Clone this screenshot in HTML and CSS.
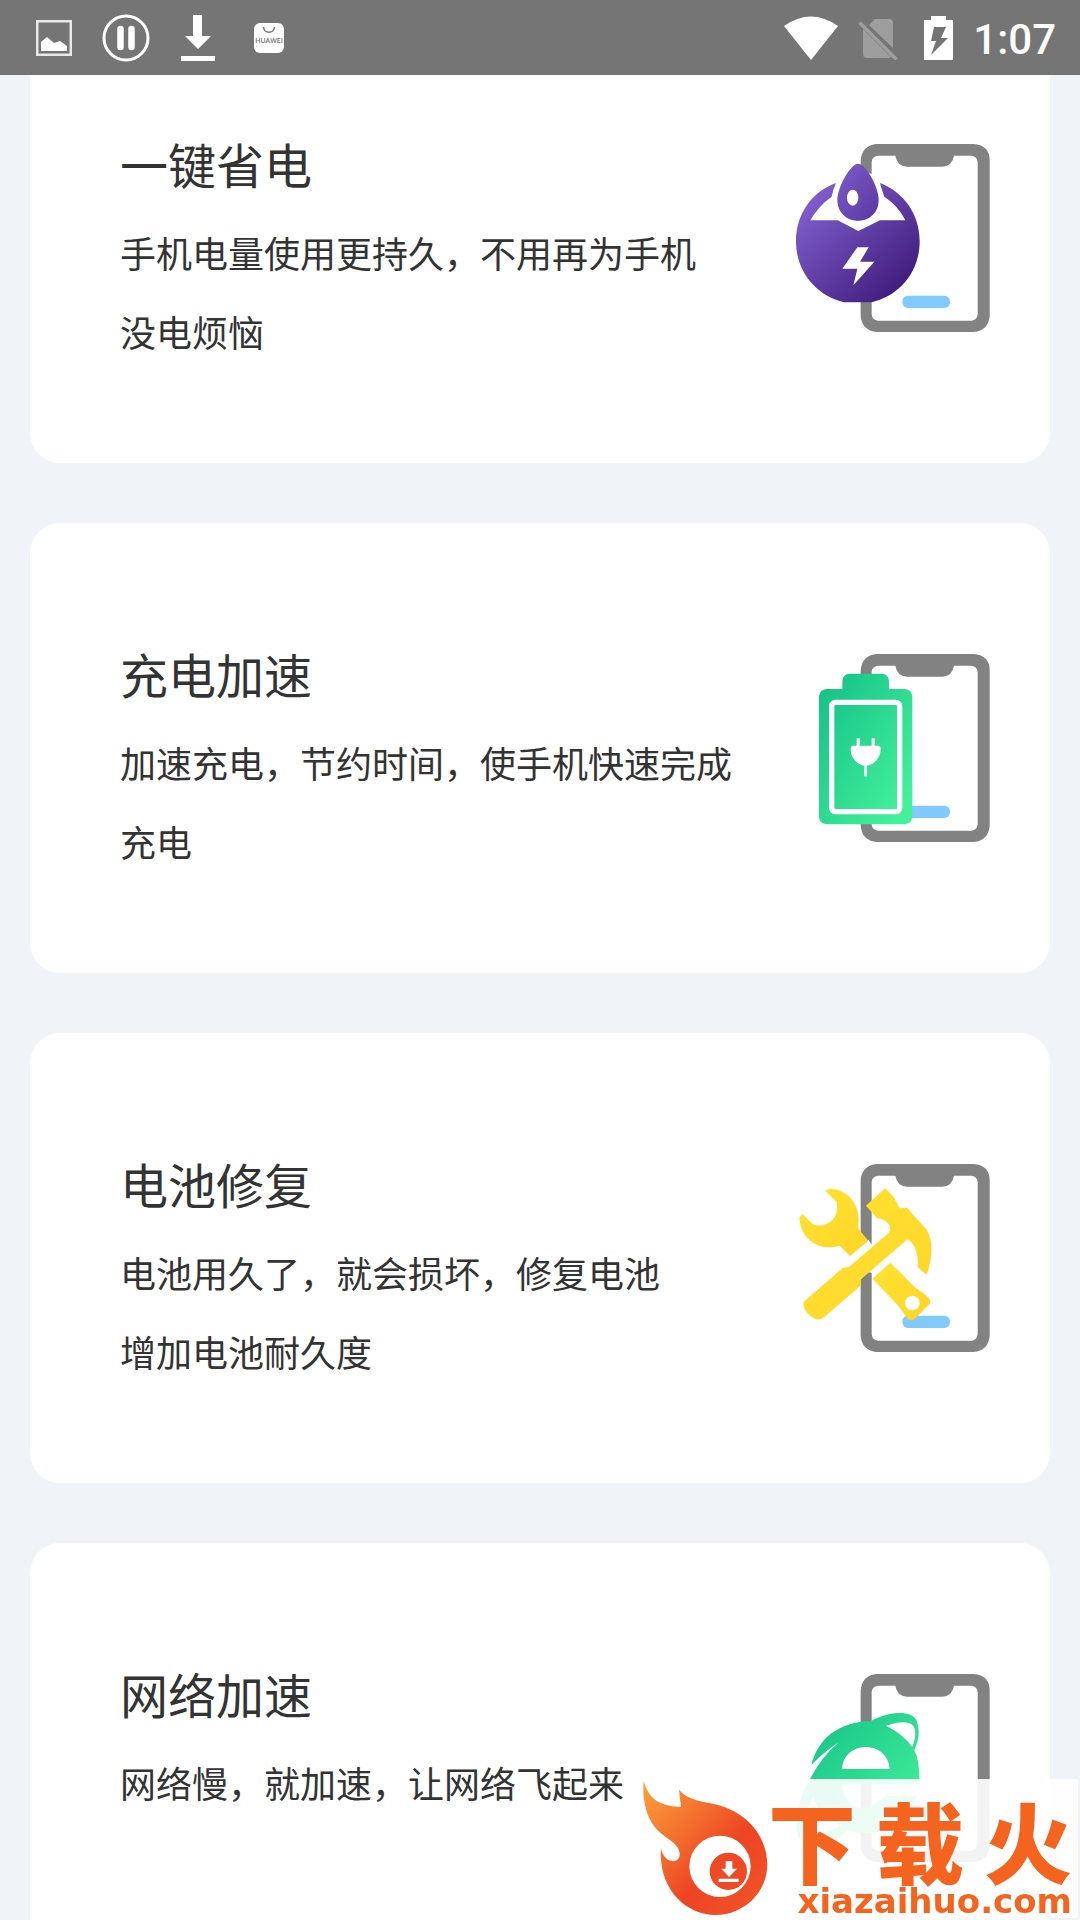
FILE: index.html
```html
<!DOCTYPE html>
<html lang="zh-CN">

<head>
  <meta charset="UTF-8" />
  <meta name="viewport" content="width=device-width, initial-scale=1.0" />
  <title>省电管家</title>
  <link rel="stylesheet" href="styles.css">
</head>

<body>
  <header class="status-bar">
    <div class="status-left">
      <svg class="icon-picture" viewBox="0 0 36 36">
        <rect x="1" y="1" width="34" height="34" fill="none" stroke="#e8e8e8" stroke-width="3" />
        <path d="M5 31V22L11 17L18 23L24 21L31 26V31Z" fill="#fff" />
      </svg>
      <svg class="icon-pause" viewBox="0 0 48 48">
        <circle cx="24" cy="24" r="22" fill="none" stroke="#fff" stroke-width="3" />
        <path d="M18.500 15V33M29.500 15V33" stroke="#fff" stroke-width="6.500" stroke-linecap="round" />
      </svg>
      <svg class="icon-download" viewBox="0 0 36 48">
        <path d="M13 1H22V22H31L18 35L5 22H13ZM1 42H35V47H1Z" fill="#fff" />
      </svg>
      <svg class="icon-store" viewBox="0 0 30 30">
        <rect width="30" height="30" rx="6" fill="#fff" />
        <path d="M9.500 4C10 11 20 11 20.500 4" fill="none" stroke="#757575" stroke-width="1.500" />
        <text x="15" y="20" text-anchor="middle">HUAWEI</text>
      </svg>
    </div>
    <div class="status-right">
      <svg class="icon-wifi" viewBox="0 0 54 44">
        <path d="M0 10Q27 -9 54 10L27 44Z" fill="#fff" />
      </svg>
      <svg class="icon-sim" viewBox="0 0 40 44">
        <path d="M17 3H31Q35 3 35 7V32L11 9ZM5 13L33 41Q32 42 31 42H9Q5 42 5 38Z" fill="#9e9e9e" />
        <path d="M1.500 6.500L38.500 43.500" stroke="#9e9e9e" stroke-width="3.500" />
      </svg>
      <svg class="icon-battery" viewBox="0 0 29 44">
        <path d="M7 0H22V4H29V44H0V4H7Z" fill="#fff" />
        <path d="M10 11H22L17 22H24L7 39L12 25H7Z" fill="#757575" />
      </svg>
      <span class="time">1:07</span>
    </div>
  </header>

  <!-- shared phone outline used by every card -->
  <svg class="defs" width="0" height="0">
    <defs>
      <symbol id="phone" viewBox="75 71 585 564">
        <path fill="#828282" fill-rule="evenodd" d="M320 71H611Q659 75 659 120V587Q655 631 611 635H320Q276 631 272 587V120Q276 75 320 71ZM324 106Q306 108 305 125V582Q306 599 324 601H605Q621 599 623 582V125Q621 108 605 106H552Q547 137 517 139H411Q381 137 376 106Z" />
        <rect x="397" y="526" width="143" height="37" rx="17" fill="#80caff" />
      </symbol>
      <linearGradient id="purple" x1="0" y1="0" x2="1" y2="1">
        <stop offset="0.15" stop-color="#7d5cc8" />
        <stop offset="0.9" stop-color="#3e1a7a" />
      </linearGradient>
      <linearGradient id="drop" x1="0" y1="0" x2="1" y2="1">
        <stop offset="0" stop-color="#7d5cc8" />
        <stop offset="1" stop-color="#5b38a0" />
      </linearGradient>
      <linearGradient id="green" x1="0" y1="0" x2="1" y2="1">
        <stop offset="0.1" stop-color="#18c488" />
        <stop offset="0.9" stop-color="#43f19b" />
      </linearGradient>
      <linearGradient id="yellow" x1="0" y1="0" x2="1" y2="1">
        <stop offset="0" stop-color="#ffe430" />
        <stop offset="1" stop-color="#ffd42a" />
      </linearGradient>
      <linearGradient id="flame" x1="0" y1="0" x2="1" y2="1">
        <stop offset="0" stop-color="#fca13a" />
        <stop offset="0.3" stop-color="#f4762f" />
        <stop offset="0.6" stop-color="#ee4424" />
        <stop offset="1" stop-color="#f0562a" />
      </linearGradient>
    </defs>
  </svg>

  <main class="card-list">
    <section class="card">
      <div class="card-text">
        <h2>一键省电</h2>
        <p>手机电量使用更持久，不用再为手机<br>没电烦恼</p>
      </div>
      <svg class="card-icon" viewBox="75 71 585 564">
        <use href="#phone" x="75" y="71" width="585" height="564" />
        <path fill="#fff" d="M305 160L272 155L200 180L120 300L265 333L408 300L330 187Z" />
        <path fill="url(#purple)" d="M198 188Q188 210 185 229Q145 257 121 300H203L265 332L330 300H406Q385 257 343 229Q335 208 330 188C400 215 449 280 449 362C449 455 390 525 305 546H222C138 525 78 455 78 362C78 280 128 212 198 188Z" />
        <path fill="url(#drop)" d="M264 130C288 130 326 202 326 238C326 276 299 301 264 301C229 301 202 276 202 238C202 202 241 130 264 130Z" />
        <ellipse cx="248" cy="232" rx="17" ry="24" fill="#fff" />
        <path fill="#fff" d="M262 381H296L270 424H313L250 495L262 445H217Z" />
      </svg>
    </section>

    <section class="card">
      <div class="card-text">
        <h2>充电加速</h2>
        <p>加速充电，节约时间，使手机快速完成<br>充电</p>
      </div>
      <svg class="card-icon" viewBox="75 71 585 564">
        <use href="#phone" x="75" y="71" width="585" height="564" />
        <path fill="url(#green)" d="M237 130H337Q357 133 357 153V176H405Q425 178 427 198V560Q425 580 405 582H169Q149 580 147 560V198Q149 178 169 176H217V153Q217 133 237 130Z" />
        <rect x="185" y="216" width="204" height="328" rx="12" fill="none" stroke="#fff" stroke-width="16" />
        <path fill="#fff" d="M260 324H269V346H305V324H314V346H326Q332 346 332 354C332 383 315 402 291 406V438H283V406C259 402 242 383 242 354Q242 346 248 346H260Z" />
      </svg>
    </section>

    <section class="card">
      <div class="card-text">
        <h2>电池修复</h2>
        <p>电池用久了，就会损坏，修复电池<br>增加电池耐久度</p>
      </div>
      <svg class="card-icon" viewBox="75 71 585 564">
        <use href="#phone" x="75" y="71" width="585" height="564" />
        <path fill="#fff" d="M240 346L295 298L306 313V398L295 395L272 416V350Z" />
        <path fill="url(#yellow)" d="M166 152Q174 144 187 146C240 151 276 202 264 264L295 301L240 347L209 316C144 336 91 294 88 231L98 222L128 251Q150 261 177 247Q207 228 200 184Z" />
        <path fill="url(#yellow)" fill-rule="evenodd" d="M361 367L433 439L471 467Q485 480 479 490L433 537Q426 543 413 535L386 498L308 415ZM427 466A22 22 0 1 0 427 510A22 22 0 1 0 427 466Z" />
        <path fill="url(#yellow)" d="M345 144L371 169L389 204L411 202L470 268C491 302 487 362 469 404L443 380C447 340 432 306 412 297L273 417V435L162 531Q144 545 121 527Q98 507 101 485L219 382L237 380L356 278Q366 264 354 249Q344 237 320 232L288 196Z" />
      </svg>
    </section>

    <section class="card">
      <div class="card-text">
        <h2>网络加速</h2>
        <p>网络慢，就加速，让网络飞起来</p>
      </div>
      <svg class="card-icon" viewBox="75 71 585 564">
        <use href="#phone" x="75" y="71" width="585" height="564" />
        <path fill="#fff" d="M216 356C222 268 353 268 359 356ZM348 226Q410 205 437 224V290L400 260Z" />
        <path fill="url(#green)" fill-rule="evenodd" d="M124 344C145 262 207 215 303 212C363 180 424 181 439 209Q456 248 433 300Q449 330 449 402H216C220 465 276 500 330 450L348 438H441C410 520 330 570 235 540C170 590 100 600 82 550C72 500 91 430 122 382Q158 315 205 277Q165 301 124 344ZM216 356H359C353 268 222 268 216 356ZM348 226Q398 250 427 290C450 225 430 200 348 226ZM130 442C96 500 90 550 120 552C150 555 190 540 215 525Q150 500 130 442Z" />
      </svg>
    </section>
  </main>

  <aside class="watermark">
    <svg class="watermark-logo" viewBox="0 0 375 405">
      <path fill="url(#flame)" d="M2 0C18 58 55 76 114 78L108 26C128 50 160 60 210 68C305 87 373 162 373 250C373 335 303 402 218 402C125 402 45 320 54 202C60 232 80 245 98 239Q116 231 107 205C95 177 65 174 35 137C5 100 -2 42 2 0Z" />
      <circle cx="231" cy="256" r="92" fill="#fff" />
      <circle cx="256" cy="271" r="56" fill="#ee4a26" />
      <path fill="#fff" d="M248 241H268V263H282L258 288L235 263H248ZM227 293H287V303H227Z" />
    </svg>
    <div class="watermark-text">
      <strong class="watermark-name"><span>下</span><span>载</span><span>火</span></strong>
      <span class="watermark-url">xiazaihuo.com</span>
    </div>
  </aside>
</body>

</html>
```
FILE: styles.css
```css
* {
  box-sizing: border-box;
}

body {
  margin: 0;
  height: 100vh;
  overflow: hidden;
  background: #f0f4f9;
  color: #333;
  font-family: "Noto Sans CJK SC", sans-serif;
}

svg {
  display: block;
  flex-shrink: 0;
}

.defs {
  position: absolute;
}

.status-bar {
  position: fixed;
  top: 0;
  left: 0;
  right: 0;
  z-index: 2;
  height: 75px;
  padding: 0 24px 0 36px;
  display: flex;
  justify-content: space-between;
  align-items: center;
  background: #757575;
}

.status-left,
.status-right {
  display: flex;
  align-items: center;
}

.status-left {
  gap: 30px;
}

.status-right {
  gap: 20px;
}

.icon-picture {
  width: 36px;
  height: 36px;
}

.icon-pause {
  width: 48px;
  height: 48px;
}

.icon-download {
  width: 36px;
  height: 48px;
}

.icon-store {
  width: 30px;
  height: 30px;
  margin-left: 8px;
}

.icon-store text {
  font-family: "Open Sans", sans-serif;
  font-size: 7px;
  font-weight: 600;
  fill: #757575;
}

.icon-wifi {
  width: 54px;
  height: 44px;
}

.icon-sim {
  width: 40px;
  height: 44px;
  margin-right: 6px;
}

.icon-battery {
  width: 29px;
  height: 44px;
}

.time {
  padding-top: 4px;
  font-family: Roboto, sans-serif;
  font-size: 42px;
  font-weight: 500;
  line-height: 48px;
  color: #fff;
}

.card-list {
  display: flex;
  flex-direction: column;
  gap: 60px;
  padding: 13px 30px;
}

.card {
  flex-shrink: 0;
  min-height: 450px;
  padding: 0 60px 0 90px;
  display: flex;
  justify-content: space-between;
  align-items: center;
  background: #fff;
  border-radius: 30px;
}

.card-text {
  padding-top: 10px;
}

.card-text h2 {
  margin: 0 0 2px;
  font-size: 48px;
  font-weight: 400;
  line-height: 96px;
}

.card-text p {
  margin: 0;
  min-height: 158px;
  font-size: 36px;
  line-height: 79px;
}

.card-icon {
  width: 195px;
  height: 188px;
}

.watermark {
  position: fixed;
  right: 2px;
  bottom: 2px;
  z-index: 1;
  height: 139px;
  padding: 2px 6px 0 5px;
  display: flex;
  align-items: flex-start;
  background: rgba(255, 255, 255, 0.9);
}

.watermark-logo {
  width: 125px;
  height: 135px;
}

.watermark-text {
  min-width: 304px;
  padding-top: 14px;
  display: flex;
  flex-direction: column;
  color: #f4641e;
}

.watermark-name {
  display: flex;
  justify-content: space-between;
  font-size: 88px;
  font-weight: 900;
  line-height: 88px;
}

.watermark-url {
  text-align: right;
  font-family: "DejaVu Sans", sans-serif;
  font-size: 34px;
  font-weight: 700;
  line-height: 36px;
}
```
